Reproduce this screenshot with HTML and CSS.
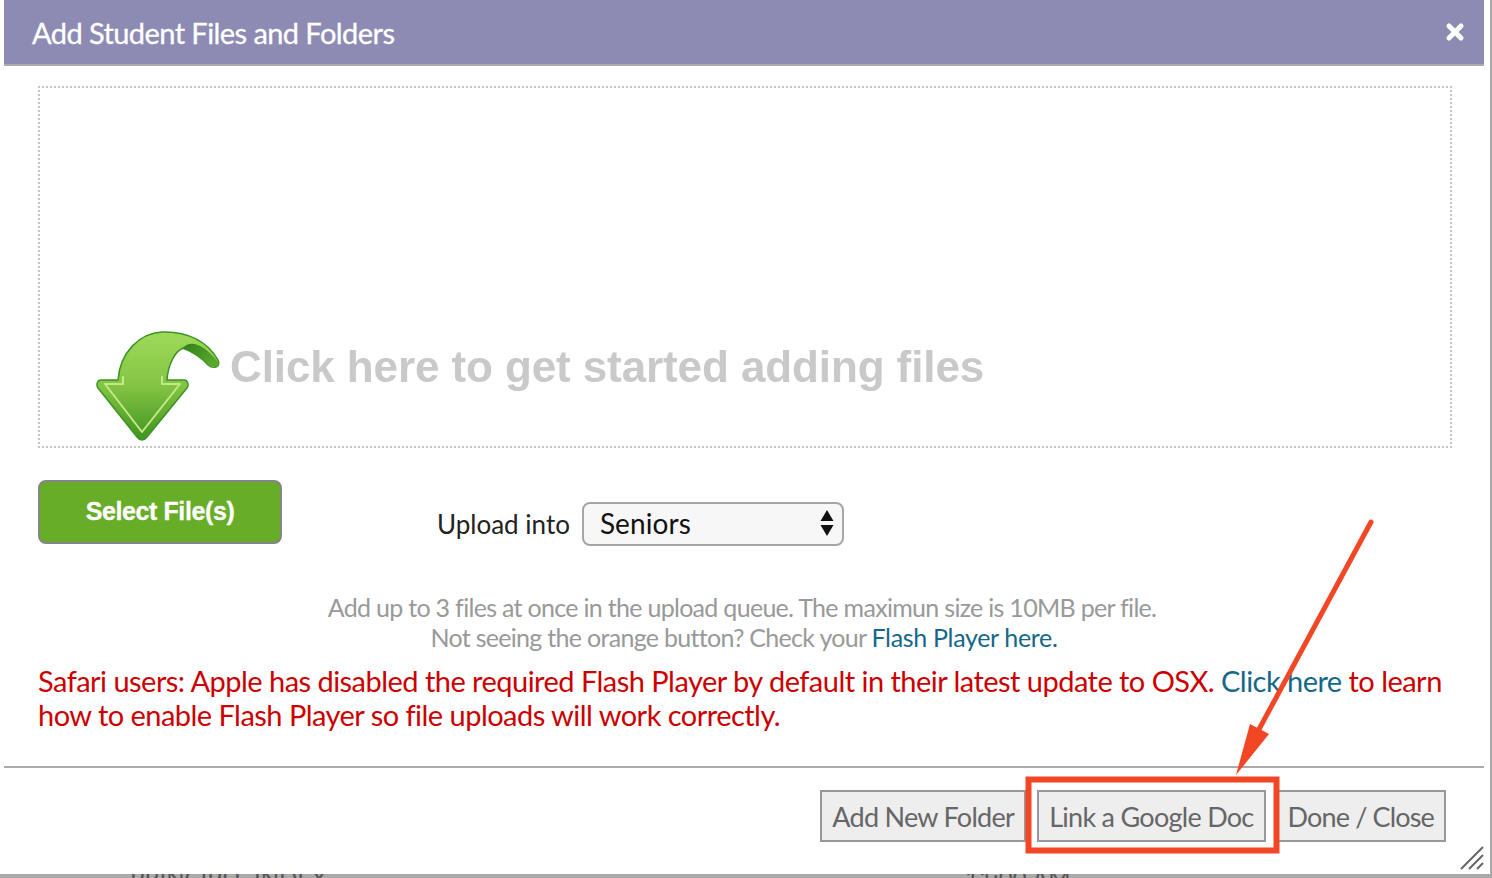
FILE: index.html
```html
<!DOCTYPE html>
<html lang="en">
<head>
<meta charset="utf-8">
<title>Add Student Files and Folders</title>
<link rel="stylesheet" href="styles.css">
</head>
<body>
<div class="dialog">
  <header class="titlebar">
    <h1 class="title">Add Student Files and Folders</h1>
    <svg class="close" width="20" height="20" viewBox="0 0 20 20" aria-label="Close"><path d="M4 4 L16 16 M16 4 L4 16" stroke="#fff" stroke-width="5" stroke-linecap="round"/></svg>
  </header>
  <main class="content">
    <div class="dropzone">
      <svg class="drop-arrow" width="126" height="114" viewBox="0 0 126 114">
        <defs>
          <linearGradient id="g1" x1="0" y1="0" x2="0" y2="1"><stop offset="0" stop-color="#9fd95a"/><stop offset="0.5" stop-color="#84c444"/><stop offset="1" stop-color="#3f9420"/></linearGradient>
          <linearGradient id="g2" x1="0" y1="0" x2="1" y2="0.6"><stop offset="0" stop-color="#2f7f1a"/><stop offset="1" stop-color="#5aa82c"/></linearGradient>
        </defs>
        <path d="M22 50 C24 22 44 3 66 2 C92 1 112 12 122 30 C125 38 117 39 112 35 C105 27 97 22 87 18 C78 22 72 36 71 50 L88 50 C92 50 93 55 91 58 L51 107 C48 111 44 111 41 107 L2 58 C0 55 1 50 5 50 Z" fill="url(#g1)" stroke="#3c9422" stroke-width="1.5" stroke-linejoin="round"/>
        <path d="M86 19 C92 11 104 10 122 32 C124 38 117 39 112 35 C104 26 96 20 86 19 Z" fill="url(#g2)"/>
        <path d="M27 46 L27 54 L9 54 L46 102 L84 54 L66 54 L66 46" fill="none" stroke="#c4e886" stroke-width="2" stroke-linejoin="round"/>
      </svg>
      <span class="drop-text">Click here to get started adding files</span>
    </div>
    <div class="controls">
      <button class="select-btn" type="button">Select File(s)</button>
      <label class="upload">
        <span>Upload into</span>
        <span class="select">
          <span>Seniors</span>
          <svg width="14" height="28" viewBox="0 0 14 28"><path d="M7 1 L13.5 12 L0.5 12 Z M7 27 L13.5 16 L0.5 16 Z" fill="#111"/></svg>
        </span>
      </label>
    </div>
    <div class="help">
      <p class="help-first">Add up to 3 files at once in the upload queue. The maximun size is 10MB per file.</p>
      <p>Not seeing the orange button? Check your <a href="#">Flash Player here.</a></p>
    </div>
    <p class="warning">Safari users: Apple has disabled the required Flash Player by default in their latest update to OSX. <a href="#">Click here</a> to learn how to enable Flash Player so file uploads will work correctly.</p>
  </main>
  <footer class="actions">
    <button class="action action-add" type="button">Add New Folder</button>
    <button class="action" type="button">Link a Google Doc</button>
    <button class="action action-done" type="button">Done / Close</button>
    <svg class="grip" width="24" height="24" viewBox="0 0 24 24"><path d="M1 23 L23 1 M9 23 L23 9 M17 23 L23 17" stroke="#666" stroke-width="2"/></svg>
  </footer>
</div>
<div class="backdrop"><span class="back-a">PRINCIPLE INDEX</span><span class="back-b">11:00 AM</span></div>
<svg class="annotation" width="1492" height="878" viewBox="0 0 1492 878">
  <rect x="1028.500" y="779.500" width="248" height="71" fill="none" stroke="#f24625" stroke-width="6"/>
  <path d="M1371 522 L1257 733" stroke="#f24625" stroke-width="5" stroke-linecap="round"/>
  <path d="M1236 775 L1250 724 L1269 734 Z" fill="#f24625"/>
</svg>
</body>
</html>
```
FILE: styles.css
```css
* { box-sizing: border-box; }
html, body { margin: 0; height: 878px; overflow: hidden; background: #fff; }
body { position: relative; font-family: Lato, "Noto Sans", sans-serif; }
.dialog {
  height: 874px;
  margin-left: 4px;
  margin-right: 8px;
  display: flex;
  flex-direction: column;
}
.titlebar {
  height: 66px;
  flex: none;
  background: #8d8bb3;
  border-bottom: 2px solid #aaa;
  display: flex;
  align-items: center;
  justify-content: space-between;
  padding: 0 19px 0 28px;
}
.title { margin: 0; color: #fff; font-size: 29px; font-weight: 400; letter-spacing: -0.57px; -webkit-text-stroke: 0.3px #fff; }
.close { display: block; }
.content { flex: 1; padding: 20px 32px 0 34px; }
.dropzone {
  height: 362px;
  border: 2px dotted #c4c4c4;
  display: flex;
  align-items: flex-end;
  padding: 0 0 2px 56px;
}
.drop-arrow { flex: none; margin-right: 10px; filter: blur(0.4px); }
.drop-text {
  color: #c9c9c9;
  font-family: "Liberation Sans", Arial, sans-serif;
  font-size: 44px;
  font-weight: 700;
  letter-spacing: -0.1px;
  margin-bottom: 52px;
  margin-left: -2px;
  white-space: nowrap;
  filter: blur(0.6px);
}
.controls { display: flex; align-items: flex-start; margin-top: 32px; }
.select-btn {
  width: 244px;
  height: 64px;
  background: #68ad27;
  border: 2px solid #858585;
  border-radius: 8px;
  color: #fff;
  font-family: "Liberation Sans", Arial, sans-serif;
  font-size: 25px;
  font-weight: 700;
  letter-spacing: -0.4px;
  padding-bottom: 2px;
  -webkit-text-stroke: 0.3px #fff;
}
.upload { display: flex; align-items: center; gap: 12px; margin: 22px 0 0 155px; color: #222; font-size: 26px; }
.select {
  width: 262px;
  height: 44px;
  border: 2px solid #a6a6a6;
  border-radius: 8px;
  background: #f7f7f7;
  color: #111;
  font-size: 28px;
  letter-spacing: 0.1px;
  display: flex;
  align-items: center;
  justify-content: space-between;
  padding: 0 8px 2px 16px;
}
.help { margin-top: 46px; padding-right: 2px; text-align: center; color: #999; font-size: 25px; line-height: 30px; letter-spacing: -0.7px; }
.help p { margin: 0; }
.help .help-first { padding-right: 4px; }
.help a { color: #14688a; text-decoration: none; letter-spacing: -0.33px; }
.warning { margin: 12px 0 0; color: #cc0000; font-size: 29px; line-height: 34px; letter-spacing: -0.53px; }
.warning a { color: #14688a; text-decoration: none; }
.actions {
  flex: none;
  height: 108px;
  border-top: 2px solid #aaa;
  position: relative;
  display: flex;
  justify-content: flex-end;
  align-items: flex-start;
  gap: 10px;
  padding: 22px 38px 0 0;
}
.action {
  height: 52px;
  background: #eee;
  border: 2px solid #999;
  color: #666;
  font-family: Lato, sans-serif;
  font-size: 27px;
  letter-spacing: -0.72px;
  padding: 0 10px;
}
.action-add { margin-right: 1px; }
.action-done { letter-spacing: -0.85px; }
.grip { position: absolute; right: 0; bottom: 4px; }
.backdrop {
  position: absolute;
  left: 0;
  right: 0;
  bottom: 0;
  height: 4px;
  background: #aaa;
  overflow: hidden;
  font-size: 24px;
  line-height: 4px;
  color: #555;
}
.backdrop span { position: absolute; top: 2px; white-space: nowrap; }
.back-a { left: 130px; }
.back-b { left: 965px; }
body::after {
  content: "";
  position: absolute;
  top: 0;
  right: 0;
  width: 2px;
  height: 878px;
  background: #aaa;
}
.annotation { position: absolute; left: 0; top: 0; pointer-events: none; }
```
